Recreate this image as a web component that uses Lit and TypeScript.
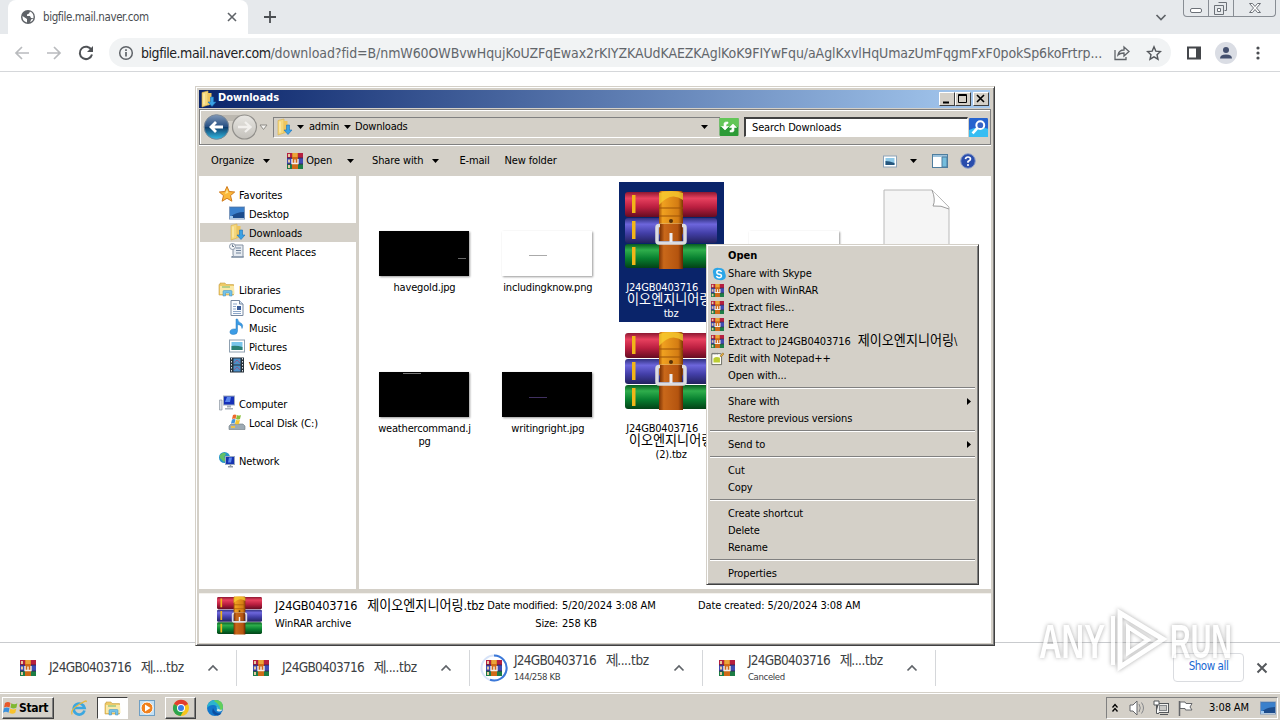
import { LitElement, html, css, svg, nothing } from 'lit';
import { customElement, property } from 'lit/decorators.js';
import { classMap } from 'lit/directives/class-map.js';

const chevronUp = html`<svg width="12" height="12" viewBox="0 0 12 12"><path d="M1.500 8.500 6 4l4.500 4.500" fill="none" stroke="#5f6368" stroke-width="1.700"/></svg>`;

const booksLarge = svg`
  <defs>
    <linearGradient id="r" x2="0" y2="1"><stop stop-color="#8d1730"/><stop offset=".25" stop-color="#e8415f"/><stop offset=".6" stop-color="#bb1f40"/><stop offset="1" stop-color="#650c22"/></linearGradient>
    <linearGradient id="b" x2="0" y2="1"><stop stop-color="#30307e"/><stop offset=".25" stop-color="#6d66dc"/><stop offset=".6" stop-color="#433fa8"/><stop offset="1" stop-color="#23225e"/></linearGradient>
    <linearGradient id="g" x2="0" y2="1"><stop stop-color="#075c20"/><stop offset=".25" stop-color="#2fae4c"/><stop offset=".6" stop-color="#088030"/><stop offset="1" stop-color="#034217"/></linearGradient>
    <linearGradient id="s" x2="1" y2="0"><stop stop-color="#a85307"/><stop offset=".15" stop-color="#f0a120"/><stop offset=".8" stop-color="#d47c13"/><stop offset="1" stop-color="#7c3804"/></linearGradient>
    <linearGradient id="t" x2="1" y2="0"><stop stop-color="#7c3305"/><stop offset=".2" stop-color="#c9681a"/><stop offset=".8" stop-color="#b4540f"/><stop offset="1" stop-color="#652703"/></linearGradient>
  </defs>
  <rect x="0" y="2" width="92" height="25" rx="3" fill="url(#r)"/>
  <rect x="0" y="28" width="92" height="25" rx="3" fill="url(#b)"/>
  <rect x="0" y="54" width="92" height="24" rx="3" fill="url(#g)"/>
  <path d="M7 5h3.500v18H7zM7 31h3.500v18H7zM7 57h3.500v18H7z" fill="#f2b619"/>
  <rect x="34" y="53" width="24" height="26" fill="url(#t)"/>
  <rect x="34" y="1" width="24" height="44" rx="2" fill="url(#s)"/>
  <path d="M34 3q12 -4 24 0v7q-12 -9 -24 5z" fill="#f7cf32" opacity=".75"/>
  <path d="M34 18h24M34 26h24" stroke="#9c5206" stroke-width="1.200"/>
  <circle cx="46" cy="31" r="2" fill="#57320a"/>
  <rect x="32" y="35.500" width="28" height="17.500" rx="2" fill="none" stroke="#dcdce0" stroke-width="3.500"/>
  <rect x="35" y="34" width="22" height="17" fill="url(#t)"/>
  <path d="M46 43v9" stroke="#ececf1" stroke-width="3"/>`;

const booksSmall = svg`
  <rect width="16" height="5" fill="#b61f3f"/><rect y="5" width="16" height="6" fill="#3f4bb4"/><rect y="11" width="16" height="5" fill="#1c7d45"/>
  <path d="M1 1h2v3H1zM1 6.500h2v3H1zM1 12h2v3H1z" fill="#e6c9a0"/>
  <path d="M0 5h16M0 11h16" stroke="#31204b" stroke-width=".8"/>
  <rect x="5" width="6" height="16" fill="#cf6a18"/><rect x="5.500" width="5" height="4" fill="#eca53a"/>
  <path d="M5 6v4.500h6V6M8 6.500v3.500" fill="none" stroke="#f4eee8" stroke-width="1.400"/>`;

const folderDown = svg`
  <path d="M2 1.500 8 0v14l-6 2z" fill="#f5d77b" stroke="#d6ae49" stroke-width=".6"/>
  <path d="M8 2h3.500v11L8 14.500z" fill="#eec45c"/><path d="M4 2.500v11" stroke="#fff3c4"/>
  <path d="M10.500 6h3v5H16l-4 4.500L8 11h2.500z" fill="#3aa1e4" stroke="#1b6fb6" stroke-width=".6"/>`;

const libraryFolder = svg`
  <path d="M0 3.500h1V2h5l1 1.500h7.500V14H0z" fill="#efcb66" stroke="#c6a048" stroke-width=".6"/>
  <path d="M1 5h14l.500 8H1z" fill="#fae9a8"/><path d="M3 6h8" stroke="#73b56b"/>
  <path d="M4 15V10.500q0-1 1-1h7q1 0 1 1V15h-2.500v-3h-4v3z" fill="#74c2e8" stroke="#3f8fc0" stroke-width=".5"/>`;

const icons: Record<string, unknown> = {
  rar: booksSmall,
  downloads: folderDown,
  libraries: libraryFolder,
  star: svg`<path d="m8 .5 2.200 5 5.500.5-4.200 3.600 1.400 5.600L8 12.300l-4.900 2.900 1.400-5.600L.3 6l5.500-.5z" fill="#fbb83a" stroke="#d17b1d"/><path d="m8 3 1.300 3.700L6 8z" fill="#ffe695"/>`,
  desktop: svg`<rect x=".5" y="2" width="15" height="12" fill="#1c4c8c" stroke="#7c98bd"/><path d="M1 2.500h14V7Q7 7 1 12z" fill="#3a80cc"/><path d="M1 13.500h14" stroke="#b5c8dc"/><path d="M1 11h3v2.500H1z" fill="#9fc8ee"/>`,
  recent: svg`<path d="M4 2h10v12H3q2-1 1-3z" fill="#e6ebf1" stroke="#8491a1"/><path d="M7 5h5M7 7.500h5M7 10h5M2 14h13" stroke="#71839a"/><circle cx="3.500" cy="3.500" r="3" fill="#f4f6f8" stroke="#8b98a8"/><path d="M3.500 1.500v2H5" fill="none" stroke="#66788d"/>`,
  documents: svg`<path d="M2 .5h8.500L14 4v11.500H2z" fill="#fbfdff" stroke="#7788a0"/><path d="M10.500.5V4H14" fill="#d1dff0" stroke="#7788a0"/><path d="M4 4h4M4 6.500h3M4 9h3M4 11.500h8M4 13.500h8" stroke="#8ca6c8"/><path d="M8 6h4v4H8z" fill="#395d9a"/>`,
  music: svg`<path d="M7 0h1.500q.5 3 4 4.500 2 1.500.5 5 0-3.500-4.500-4V12q0 3.500-4 3.500T1 12.500 7 10z" fill="#3b9ce6" stroke="#2479bd" stroke-width=".5"/>`,
  pictures: svg`<rect x=".5" y="2" width="15" height="12" fill="#fff" stroke="#8fa0b0"/><path d="M2.500 4h11v8h-11z" fill="#79c5ea"/><path d="M2.500 8q5-1 11 1v3h-11z" fill="#2b8074"/>`,
  videos: svg`<rect x="1" y=".5" width="14" height="15" fill="#26313a"/><path d="M2.500 1v14M13.500 1v14" stroke="#dbe2e8" stroke-dasharray="1.500 1.500"/><path d="M4.500 1.500h7v6h-7zM4.500 8.500h7v6h-7z" fill="#4c8fc9"/><path d="m5 6 3-3 3 3M5 13l3-3 3 3" stroke="#8c5d8e" fill="none"/>`,
  computer: svg`<path d="M.5 5H3v10H.5z" fill="#dfe3e8" stroke="#8d97a2" stroke-width=".7"/><rect x="4.500" y="1" width="11" height="9" fill="#1530b8" stroke="#a2aec0"/><path d="M8 2h4l-1 5H6z" fill="#5a86ee"/><path d="M8 10.500h4v2H8zM6 13h8v1.500H6z" fill="#a8b0ba"/>`,
  disk: svg`<path d="M2 10h12l2 2v3.500H0V12z" fill="#9daab3" stroke="#6d7880" stroke-width=".6"/><path d="M2 12h4v2H2z" fill="#ecc24c"/><path d="M4 1q2-1 3.500 0L6.500 5Q5 4 3 5z" fill="#ee6a2c"/><path d="M8 1q2 1 4 0l-1 4q-2 1-4 0z" fill="#8abf3b"/><path d="M3 5.500q2-1 3.500 0l-1 4Q4 8.500 2 9.500z" fill="#3f94dd"/><path d="M7 5.800q2 1 4 0l-1 4q-2 1-4 0z" fill="#f5c531"/>`,
  network: svg`<circle cx="5.500" cy="5.500" r="5.500" fill="#2596c7"/><path d="M1 3q4-4 6-1L5 5l2 2-2 3-4-4z" fill="#62c068"/><rect x="6.500" y="4.500" width="9" height="8" fill="#1633b0" stroke="#9aa9c0"/><path d="M10 5.500h3l-1 5H9z" fill="#5c88ed"/><path d="M9 14.800h5M11.500 12.500v3" stroke="#9099a5" stroke-width="1.500"/>`,
  skype: svg`<path d="M8 1q6.500 0 7 6 2 4.500-1 7-3 2-5.500.8Q1.500 15 1.500 8 0 4 3 1.800 5.500.2 8 1" fill="#2ba5e8"/><path d="M11 5.500Q10 4 8 4 5.500 4 5.500 6t2.700 2.200T10.800 10.200 8 12.200Q6 12.200 5 10.500" fill="none" stroke="#fff" stroke-width="1.700"/>`,
  notepad: svg`<path d="M1 2h11l1 2v11.500H1z" fill="#fffef5" stroke="#55574e"/><path d="M3 8q3-3 8-1v6H3z" fill="#bccd33"/><path d="M2 1v2M4 1v2M6 1v2M8 1v2" stroke="#7b7b7b"/><path d="m11 5 3.500-4L16 2.500 12.500 6z" fill="#f4b53a" stroke="#6b512b" stroke-width=".6"/>`,
  views: svg`<rect x="1.500" y="3" width="13" height="11" fill="#fff" stroke="#8da3b8"/><path d="M3.500 5h9v7h-9z" fill="#8fc9e8"/><path d="M3.500 8q4 0 9 2v2h-9z" fill="#25567d"/>`,
  preview: svg`<rect x=".5" y="1.500" width="15" height="13" fill="#fff" stroke="#4e7d9e"/><path d="M1 3h14" stroke="#9ac1dc" stroke-width="2"/><path d="M10 4h5v10h-5z" fill="#74bddd" stroke="#4e7d9e"/>`,
  help: svg`<circle cx="8" cy="8" r="7.300" fill="#2a4dac" stroke="#8fa0c8"/><path d="M5.500 6.200Q5.700 4 8 4t2.500 2Q10.500 7.200 8 8.500v1.200" fill="none" stroke="#fff" stroke-width="1.700"/><circle cx="8" cy="12" r="1.100" fill="#fff"/>`,
  refresh: svg`<rect width="19" height="18" x="-1.500" y="-1" rx="1" fill="#2c9b36"/><path d="M-1.500-1h19v9h-19z" fill="#63c658"/><path d="M3 4.500v3H.5L4 11l3.500-3.500H5V6q0-1.500 2-1.500V3Q3 2.500 3 4.500M13 11.500v-3h2.500L12 5 8.500 8.500H11V10q0 1.500-2 1.500V13q4 .5 4-1.500" fill="#fff" stroke="#fff" stroke-width=".6"/>`,
  search: svg`<rect width="16" height="16" rx="1" fill="#2563cf"/><path d="M0 10q8-4 16-1v7H0z" fill="#37bdf2"/><circle cx="9.500" cy="6" r="3.300" fill="#3763c4" stroke="#fff" stroke-width="1.700"/><path d="m7 8.500-4 4.500" stroke="#fff" stroke-width="2.200"/>`,
  ie: svg`<path d="M13.500 10.500A5.500 5.500 0 1 1 13.600 8H4" fill="none" stroke="#3ba7e0" stroke-width="2.700"/><path d="M1 14.500Q-1 10 8 4.500T15 2" fill="none" stroke="#e8b83c" stroke-width="1.200"/>`,
  wmp: svg`<rect x=".5" y=".5" width="15" height="15" fill="#c3e0f4" stroke="#6f9fc4"/><circle cx="8" cy="8" r="6" fill="#f0811e" stroke="#fff"/><path d="m6 4.500 5.500 3.500L6 11.500z" fill="#fff"/>`,
  chrome: svg`<circle cx="8" cy="8" r="8" fill="#f8c51c"/><path d="M8 8 1 4A8 8 0 0 1 15 4z" fill="#e23c2f"/><path d="M8 8 1 4A8 8 0 0 0 7.500 16L11 10z" fill="#2da54e"/><circle cx="8" cy="8" r="4" fill="#fff"/><circle cx="8" cy="8" r="3" fill="#3b7de9"/>`,
  edge: svg`<circle cx="8" cy="8" r="8" fill="#1277cc"/><path d="M0 8Q1 0 8 0t8 7q0 4-5 4-2 0-1.500-1Q11 5 6 5 2 5 0 8" fill="#2bb4cf"/><path d="M8 0q8 0 8 7 0 3-3 4Q14 5 7 1z" fill="#62cf5b"/><path d="M6 8q-3 7 5 7.500 2-.500 3.500-2Q8 14 6 8" fill="#0d4fa0"/><path d="M9.500 7q2 1 .5 3-1 2 4 1.200l1.500-1.400Q11 10 9.500 7" fill="#d6e7e8"/>`,
  speaker: svg`<path d="M1 5h3l4-4v14l-4-4H1z" fill="#fff" stroke="#65676a"/><path d="M10 4q2.500 4 0 8M12.500 2.500q4 5.500 0 11" fill="none" stroke="#85878a"/>`,
  lan: svg`<rect x="4.500" y="3.500" width="11" height="9" fill="#f2f2ef" stroke="#55585b"/><rect x="6.500" y="5.500" width="7" height="5" fill="#c9c9c6" stroke="#85888b"/><path d="M1 1h5v4H1zM3.500 5v8.500H6M7 14.500h8" fill="#fff" stroke="#55585b"/>`,
  flag: svg`<path d="M2.500 1v15" stroke="#65676a" stroke-width="1.500"/><path d="M3 2h5l1 1.500h6L13 7l2 3H8.500L8 8.500H3z" fill="#fff" stroke="#65676a"/>`,
  windows: svg`<path d="M2 3q3-2 5.500 0L6.500 7.500q-3-1.500-5.500 0z" fill="#e8582a"/><path d="M8.300 3.200q3 2 6 0L13.500 7.500q-3 2-6 0z" fill="#7fb832"/><path d="M1 8.300q3-1.500 5.500 0l-1 4.500Q3 11 0 12.700z" fill="#3990dd"/><path d="M7.300 8.500q3 2 6 0l-1 4.300q-3 2-6 0z" fill="#f9c22c"/>`,
};

@customElement('ui-icon')
export class UiIcon extends LitElement {
  static styles = css`
    :host { display: inline-flex; flex: none; width: 16px; height: 16px; }
    svg { width: 100%; height: 100%; display: block; overflow: visible; }
  `;

  @property() name = '';

  render() {
    return html`<svg viewBox="0 0 16 16">${icons[this.name]}</svg>`;
  }
}

@customElement('rar-books')
export class RarBooks extends LitElement {
  static styles = css`
    :host { display: block; flex: none; }
    svg { width: 100%; height: 100%; display: block; }
  `;

  render() {
    return html`<svg viewBox="0 0 92 80" preserveAspectRatio="none">${booksLarge}</svg>`;
  }
}

@customElement('browser-top')
export class BrowserTop extends LitElement {
  static styles = css`
    :host { display: block; height: 72px; box-sizing: border-box; border-bottom: 1px solid #d5d7da; }
    .strip { height: 34px; background: #e6e9ec; display: flex; align-items: flex-start; padding-left: 8px; }
    .tab {
      width: 240px; height: 34px; box-sizing: border-box; background: #fff; border-radius: 8px 8px 0 0;
      display: flex; align-items: center; padding: 0 10px 0 13px; font-size: 11.500px; color: #4a4d51;
    }
    .tab .name { flex: 1; margin-left: 8px; letter-spacing: -0.4px; }
    .plus { margin: 10px 0 0 15px; }
    .drop { margin: 11px 16px 0 auto; }
    .buttons { display: flex; height: 17px; box-sizing: border-box; margin-right: 4px; border: 1px solid #888d94; border-top: 0; border-radius: 0 0 4px 4px; }
    .buttons svg { display: block; border-right: 1px solid #888d94; }
    .buttons svg:last-child { border: 0; }
    .bar { display: flex; height: 37px; align-items: center; padding-left: 14px; }
    .bar > svg { flex: none; margin-right: 16px; }
    .omni {
      width: 1063px; height: 29px; box-sizing: border-box; border-radius: 15px; background: #f1f3f4; margin-left: -1px;
      display: flex; align-items: center; padding: 0 9px; font-size: 14px; color: #62666b;
    }
    .omni svg { flex: none; }
    .url { margin-left: 7px; width: 972px; white-space: nowrap; letter-spacing: -0.09px; }
    .url b { font-weight: normal; color: #202124; letter-spacing: -0.45px; }
    .omni .star { margin-left: 16px; }
    .bar .panel { margin: 0 11px 0 13px; }
    .bar .user { margin-right: 10px; }
  `;

  render() {
    return html`
      <div class="strip">
        <div class="tab">
          <svg width="14" height="14" viewBox="0 0 14 14"><circle cx="7" cy="7" r="7" fill="#5f6368"/><path d="M1.500 6 6 9v3.500Q1 11 1.500 6M5 1.500l4 0-1 2-2 1v1.500H9l1 2h2.500Q13 3 9 1.500M9 12l1.500-3 2-.5Q12 11 9 12" fill="#fff"/></svg>
          <span class="name">bigfile.mail.naver.com</span>
          <svg width="12" height="12" viewBox="0 0 12 12"><path d="m2 2 8 8M10 2l-8 8" stroke="#5f6368" stroke-width="1.600"/></svg>
        </div>
        <svg class="plus" width="14" height="14" viewBox="0 0 14 14"><path d="M7 1v12M1 7h12" stroke="#4b4e52" stroke-width="1.800"/></svg>
        <svg class="drop" width="12" height="12" viewBox="0 0 12 12"><path d="m1.500 4 4.500 4.500L10.500 4" fill="none" stroke="#5f6368" stroke-width="1.700"/></svg>
        <div class="buttons">
          <svg width="24" height="16"><rect x="6.500" y="8.500" width="11" height="4" rx="1.500" fill="#fff" stroke="#6c7178"/></svg>
          <svg width="24" height="16"><path d="M9.500 2.500h8v8h-2M5.500 5.500h9v9h-9z" fill="none" stroke="#6c7178"/><path d="M8.500 8.500h3v3h-3z" fill="#fff" stroke="#6c7178"/></svg>
          <svg width="41" height="16"><path d="M15.500 3.500h3l2.500 3 2.500-3h3l-4 4.500 4 4.500h-3L21 9.500l-2.500 3h-3l4-4.500z" fill="#fff" stroke="#6c7178"/></svg>
        </div>
      </div>
      <div class="bar">
        <svg width="16" height="16" viewBox="0 0 16 16"><path d="M15 8H2M8 2 2 8l6 6" fill="none" stroke="#b9bbbe" stroke-width="1.700"/></svg>
        <svg width="16" height="16" viewBox="0 0 16 16"><path d="M1 8h13M8 2l6 6-6 6" fill="none" stroke="#b9bbbe" stroke-width="1.700"/></svg>
        <svg width="16" height="16" viewBox="0 0 16 16"><path d="M13.500 5A6.200 6.200 0 1 0 14 9.500" fill="none" stroke="#4f5256" stroke-width="2"/><path d="M15 1v6H9z" fill="#4f5256"/></svg>
        <div class="omni">
          <svg width="16" height="16" viewBox="0 0 16 16"><circle cx="8" cy="8" r="6.300" fill="none" stroke="#5f6368" stroke-width="1.500"/><path d="M8 7v4.500M8 4.300V6" stroke="#5f6368" stroke-width="1.700"/></svg>
          <span class="url"><b>bigfile.mail.naver.com</b>/download?fid=B/nmW60OWBvwHqujKoUZFqEwax2rKIYZKAUdKAEZKAglKoK9FIYwFqu/aAglKxvlHqUmazUmFqgmFxF0pokSp6koFrtrp...</span>
          <svg width="17" height="16" viewBox="0 0 17 16"><path d="M2 5v9.500h11V12M5 10q1-5 6-5V2l5 4.500-5 4.500V8Q7 8 5 10z" fill="none" stroke="#5f6368" stroke-width="1.300"/></svg>
          <svg class="star" width="16" height="16" viewBox="0 0 16 16"><path d="m8 1.800 1.800 4.300 4.700.4-3.500 3.200 1 4.500L8 11.800l-4 2.400 1-4.500L1.500 6.500l4.700-.4z" fill="none" stroke="#55585c" stroke-width="1.400"/></svg>
        </div>
        <svg class="panel" width="20" height="16" viewBox="0 0 20 16"><path d="M4 2.500h12v11H4z" fill="#fff" stroke="#44474b" stroke-width="2"/><path d="M12 2h4.500v12H12z" fill="#44474b"/></svg>
        <svg class="user" width="22" height="22" viewBox="0 0 22 22"><circle cx="11" cy="11" r="11" fill="#dadde4"/><circle cx="11" cy="8" r="3" fill="#44506e"/><path d="M5 16.500q0-4 6-4t6 4z" fill="#44506e"/></svg>
        <svg width="22" height="16" viewBox="0 0 22 16"><circle cx="11" cy="3" r="1.600" fill="#4b4e52"/><circle cx="11" cy="8" r="1.600" fill="#4b4e52"/><circle cx="11" cy="13" r="1.600" fill="#4b4e52"/></svg>
      </div>
    `;
  }
}

type NavItem = { icon: string; text: string; child?: boolean; selected?: boolean };

const navItems: (NavItem | null)[] = [
  { icon: 'star', text: 'Favorites' },
  { icon: 'desktop', text: 'Desktop', child: true },
  { icon: 'downloads', text: 'Downloads', child: true, selected: true },
  { icon: 'recent', text: 'Recent Places', child: true },
  null,
  { icon: 'libraries', text: 'Libraries' },
  { icon: 'documents', text: 'Documents', child: true },
  { icon: 'music', text: 'Music', child: true },
  { icon: 'pictures', text: 'Pictures', child: true },
  { icon: 'videos', text: 'Videos', child: true },
  null,
  { icon: 'computer', text: 'Computer' },
  { icon: 'disk', text: 'Local Disk (C:)', child: true },
  null,
  { icon: 'network', text: 'Network' },
];

const caret = html`<svg width="7" height="4" viewBox="0 0 7 4"><path d="M0 0h7L3.500 4z"/></svg>`;

@customElement('explorer-window')
export class ExplorerWindow extends LitElement {
  static styles = css`
    :host {
      display: flex; flex-direction: column; box-sizing: border-box; width: 800px; height: 560px;
      border: 1px solid; border-color: #d4d0c8 #404040 #404040 #d4d0c8;
      box-shadow: inset 1px 1px #fff, inset -1px -1px #808080;
      background: #d4d0c8; padding: 3px 3px 2px;
      font-size: 11px; letter-spacing: -0.14px; color: #000;
    }
    .title {
      height: 18px; flex: none; margin-right: 1px; display: flex; align-items: center; padding: 0 1px 0 1px;
      background: linear-gradient(90deg, #0a246a, #a6caf0); color: #fff; font-weight: bold; letter-spacing: 0;
    }
    .title ui-icon { margin-right: 1px; }
    .title span { flex: 1; margin-left: 1px; line-height: 16px; height: 18px; }
    .title svg { background: #d4d0c8; border: 1px solid; border-color: #fff #404040 #404040 #fff; }
    .title svg:last-child { margin-left: 2px; }
    .address {
      height: 36px; flex: none; box-sizing: border-box; margin-top: 1px; display: flex; align-items: center;
      border: 1px solid #808080; box-shadow: inset 1px 1px #fff, 0 1px #fff; padding: 0 0 0 3px;
    }
    .nav { flex: none; }
    .path {
      width: 447px; flex: none; height: 21px; box-sizing: border-box; margin-left: 3px; display: flex; align-items: center;
      border: 1px solid #808080; border-right: 0; border-bottom-color: #fff; padding: 0 12px 0 3px;
    }
    .path span { height: 21px; line-height: 19px; letter-spacing: -0.2px; }
    .path svg { margin: 0 4px 0 5px; }
    .path ui-icon { margin-left: -1px; }
    .path ui-icon + svg { margin: 0 5px; }
    .path svg:last-of-type { margin: 0 0 0 auto; }
    .refresh { width: 16px; height: 16px; margin: 0 7px 0 1px; }
    .search {
      flex: 1; height: 20px; box-sizing: border-box; background: #fff; border: 1px solid; border-width: 2px 1px 1px 2px;
      border-color: #404040 #fff #fff #404040; padding-left: 6px; line-height: 18px;
    }
    .find { width: 19px; height: 19px; margin: 0 2px 0 1px; }
    .tools { height: 31px; flex: none; display: flex; align-items: center; padding: 0 15px 0 12px; }
    .tools span { margin-right: 9px; }
    .tools svg { margin-right: 18px; }
    .tools .rar { margin: 0 3px 0 -1px; }
    .tools .open { margin-right: 15px; }
    .tools .mail { margin: 0 15px 0 2px; }
    .tools .views { width: 16px; margin: 0 12px 0 auto; }
    .tools .preview { margin-right: 12px; margin-left: -3px; }
    .main { display: flex; height: 413px; flex: none; }
    .tree { width: 157px; flex: none; box-sizing: border-box; background: #fff; padding-top: 9px; }
    .row { height: 19px; display: flex; align-items: center; padding-left: 20px; gap: 4px; box-sizing: border-box; padding-top: 2px; }
    .row ui-icon { margin-top: -4px; }
    .row.child { padding-left: 29px; margin-left: 1px; }
    .row.selected { background: #d4d0c8; }
    .files {
      flex: 1; margin-left: 3px; background: #fff; padding: 6px 0 0 13px; display: grid; align-content: start;
      grid-template-columns: repeat(5, 105px); grid-auto-rows: 140px; gap: 1px 18.300px;
    }
    .file { display: flex; flex-direction: column; align-items: center; text-align: center; line-height: 13px; white-space: nowrap; letter-spacing: -0.18px; }
    .file > span { height: 13px; }
    .file.selected { background: #0a246a; color: #fff; }
    .pic { height: 96px; width: 100%; display: flex; justify-content: center; align-items: flex-end; margin-bottom: 3px; flex: none; }
    .thumb { width: 90px; height: 45px; margin: 0 1px 2px 0; background: #000; box-shadow: 1px 1px 2px #999; display: flex; }
    .thumb.white { background: #fff; }
    .thumb i { height: 1px; width: 18px; margin: 24px 0 0 27px; background: #aaa; }
    .thumb .right { margin: 27px 0 0 79px; width: 8px; background: #666; }
    .thumb .top { margin: 1px 0 0 24px; background: #777; }
    .thumb .violet { margin-top: 25px; background: #403060; }
    .pic rar-books { width: 92px; height: 80px; align-self: center; }
    .file .page { align-self: flex-start; margin: 7px 0 0 -2px; }
    .ko { font-size: 13.100px; letter-spacing: 0; }
    .file .ko { line-height: 11px; }
    .gap { word-spacing: 1.500px; }
    .file .gap { margin-left: 3px; }
    .details { height: 50px; flex: none; margin-top: 4px; background: #fff; border-top: 1px solid #f4f2ee; display: flex; padding: 3px 0 0 18px; box-sizing: border-box; }
    .details rar-books { width: 45px; height: 39px; margin-top: -1px; }
    .details .column { display: grid; grid-template-rows: 18px 18px; line-height: 18px; white-space: pre; }
    .details .name { width: 209px; margin-left: 13px; }
    .details .name .gap { font-size: 12.600px; letter-spacing: -0.2px; }
    .details .name .ko { letter-spacing: 0; }
    .details .keys { width: 74px; text-align: right; margin-right: 4px; letter-spacing: -0.2px; }
    .details .value { width: 136px; letter-spacing: -0.05px; }
    .details .made { letter-spacing: -0.1px; }
  `;

  renderNav(item: NavItem | null) {
    if (!item) return html`<div class="row"></div>`;
    return html`
      <div class=${classMap({ row: true, child: !!item.child, selected: !!item.selected })}>
        <ui-icon name=${item.icon}></ui-icon>${item.text}
      </div>`;
  }

  render() {
    return html`
      <div class="title">
        <ui-icon name="downloads"></ui-icon><span>Downloads</span>
        <svg width="14" height="12"><path d="M3 9.500h6" stroke="#000" stroke-width="2"/></svg>
        <svg width="14" height="12"><path d="M2.500 1.500h8v8h-8zM2.500 2.500h8" fill="none" stroke="#000"/></svg>
        <svg width="14" height="12"><path d="m3 2 7 7M10 2 3 9" stroke="#000" stroke-width="1.600"/></svg>
      </div>
      <div class="address">
        <svg class="nav" width="67" height="28" viewBox="0 0 67 28">
          <defs>
            <linearGradient id="back" x2="0" y2="1"><stop stop-color="#8098b8"/><stop offset=".48" stop-color="#275083"/><stop offset=".5" stop-color="#0e3a68"/><stop offset="1" stop-color="#33bce4"/></linearGradient>
            <linearGradient id="fwd" x2="0" y2="1"><stop stop-color="#e8e6e2"/><stop offset="1" stop-color="#c4c1bb"/></linearGradient>
          </defs>
          <path d="M14 2h28v6H14z" fill="#bcb8b0"/>
          <circle cx="13.500" cy="14" r="12.300" fill="url(#back)" stroke="#7a8896"/>
          <circle cx="41.500" cy="14" r="12" fill="url(#fwd)" stroke="#918f8b" stroke-width="1.200"/>
          <path d="M20 14H8M13 9l-5 5 5 5" fill="none" stroke="#fff" stroke-width="2.800"/>
          <path d="M35 14h12M42 9l5.500 5L42 19" fill="none" stroke="#f2f0ed" stroke-width="2.300"/>
          <path d="M57 12h7l-3.500 4.500z" fill="#f4f3f0" stroke="#8d8b86"/>
        </svg>
        <div class="path">
          <ui-icon name="downloads"></ui-icon>${caret}<span>admin</span>${caret}<span>Downloads</span>${caret}
        </div>
        <ui-icon class="refresh" name="refresh"></ui-icon>
        <div class="search">Search Downloads</div>
        <ui-icon class="find" name="search"></ui-icon>
      </div>
      <div class="tools">
        <span>Organize</span>${caret}
        <ui-icon class="rar" name="rar"></ui-icon><span class="open">Open</span>${caret}
        <span>Share with</span>${caret}
        <span class="mail">E-mail</span><span>New folder</span>
        <ui-icon class="views" name="views"></ui-icon>${caret}
        <ui-icon class="preview" name="preview"></ui-icon>
        <ui-icon name="help"></ui-icon>
      </div>
      <div class="main">
        <div class="tree">${navItems.map((item) => this.renderNav(item))}</div>
        <div class="files">
          <div class="file"><div class="pic"><div class="thumb"><i class="right"></i></div></div>havegold.jpg</div>
          <div class="file"><div class="pic"><div class="thumb white"><i></i></div></div>includingknow.png</div>
          <div class="file selected">
            <div class="pic"><rar-books></rar-books></div>
            <span class="gap">J24GB0403716&nbsp; <span class="ko">제</span></span><span class="ko">이오엔지니어링.</span><span>tbz</span>
          </div>
          <div class="file"><div class="pic"><div class="thumb white"></div></div></div>
          <div class="file">
            <div class="pic">
              <svg class="page" width="68" height="84" viewBox="0 0 68 84"><path d="M1 1h48l17 17v64H1z" fill="#f5f5f5" stroke="#b9b9b9"/><path d="M49 1q4 10 1 16 8-1 16 3" fill="#fff" stroke="#9c9c9c"/></svg>
            </div>
          </div>
          <div class="file"><div class="pic"><div class="thumb"><i class="top"></i></div></div><span>weathercommand.j</span><span>pg</span></div>
          <div class="file"><div class="pic"><div class="thumb"><i class="violet"></i></div></div>writingright.jpg</div>
          <div class="file">
            <div class="pic"><rar-books></rar-books></div>
            <span class="gap">J24GB0403716&nbsp; <span class="ko">제</span></span><span class="ko">이오엔지니어링</span><span>(2).tbz</span>
          </div>
        </div>
      </div>
      <div class="details">
        <rar-books></rar-books>
        <div class="column name"><span class="gap">J24GB0403716&nbsp; <span class="ko">제이오엔지니어링</span>.tbz</span><span>WinRAR archive</span></div>
        <div class="column keys"><span>Date modified:</span><span>Size:</span></div>
        <div class="column value"><span>5/20/2024 3:08 AM</span><span>258 KB</span></div>
        <div class="column made"><span>Date created: 5/20/2024 3:08 AM</span></div>
      </div>
    `;
  }
}

type MenuItem = { text: string; icon?: string; korean?: string; bold?: boolean; more?: boolean };

const menuItems: (MenuItem | null)[] = [
  { text: 'Open', bold: true },
  { text: 'Share with Skype', icon: 'skype' },
  { text: 'Open with WinRAR', icon: 'rar' },
  { text: 'Extract files...', icon: 'rar' },
  { text: 'Extract Here', icon: 'rar' },
  { text: 'Extract to J24GB0403716\u00a0 ', icon: 'rar', korean: '제이오엔지니어링' },
  { text: 'Edit with Notepad++', icon: 'notepad' },
  { text: 'Open with...' },
  null,
  { text: 'Share with', more: true },
  { text: 'Restore previous versions' },
  null,
  { text: 'Send to', more: true },
  null,
  { text: 'Cut' },
  { text: 'Copy' },
  null,
  { text: 'Create shortcut' },
  { text: 'Delete' },
  { text: 'Rename' },
  null,
  { text: 'Properties' },
];

@customElement('context-menu')
export class ContextMenu extends LitElement {
  static styles = css`
    :host {
      display: block; box-sizing: border-box; width: 273px; height: 341px; padding: 2px;
      background: #d4d0c8; border: 1px solid; border-color: #d4d0c8 #404040 #404040 #d4d0c8;
      box-shadow: inset 1px 1px #fff, inset -1px -1px #808080;
      font-size: 11px; letter-spacing: -0.13px;
    }
    .item { height: 17px; display: flex; align-items: center; white-space: pre; line-height: 17px; }
    .item.bold { height: 18px; font-weight: bold; letter-spacing: 0; line-height: 18px; align-items: flex-start; }
    .icon { width: 17px; display: flex; justify-content: center; padding-right: 2px; }
    ui-icon { width: 13px; height: 13px; }
    ui-icon[name="skype"] { width: 14px; height: 14px; margin-right: -2px; }
    .more { margin: 0 5px 0 auto; }
    .line { height: 1px; border-top: 1px solid #808080; background: #fff; margin: 3px 1px 4px; }
    .ko { font-size: 13.100px; letter-spacing: 0; line-height: 15px; margin-left: 1px; }
  `;

  render() {
    return menuItems.map((item) => item
      ? html`
        <div class=${classMap({ item: true, bold: !!item.bold })}>
          <span class="icon">${item.icon ? html`<ui-icon name=${item.icon}></ui-icon>` : nothing}</span>
          <span class="text">${item.text}${item.korean ? html`<span class="ko">${item.korean}</span>\\` : nothing}</span>
          ${item.more ? html`<svg class="more" width="4" height="7"><path d="M0 0v7l4-3.500z"/></svg>` : nothing}
        </div>`
      : html`<div class="line"></div>`);
  }
}

const downloads = [
  { status: '' },
  { status: '' },
  { status: '144/258 KB', progress: true },
  { status: 'Canceled' },
];

@customElement('download-shelf')
export class DownloadShelf extends LitElement {
  static styles = css`
    :host { display: flex; height: 50px; box-sizing: border-box; border-top: 1px solid #c9cbce; background: #fff; color: #3c4043; align-items: center; }
    .item { width: 233px; height: 36px; box-sizing: border-box; border-right: 1px solid #d5d7da; display: flex; align-items: center; padding: 0 17px 0 16px; }
    .item:first-child { width: 237px; padding-left: 20px; }
    .item:nth-child(3) { padding-left: 12px; }
    .badge { width: 28px; display: flex; justify-content: center; margin: 0 7px 0 -6px; }
    .item:first-child .badge { margin-right: 7px; }
    .item:nth-child(3) .badge { position: relative; margin: 0 6px 0 -2px; }
    .ring { position: absolute; left: 0; top: -6px; }
    .text { flex: 1; font-size: 13.500px; letter-spacing: -0.74px; line-height: 17px; white-space: nowrap; word-spacing: 1.800px; }
    .item:nth-child(-n+2) .text { margin-top: -1px; }
    .ko { letter-spacing: -1.500px; font-size: 14px; line-height: 12px; }
    .dots { letter-spacing: -0.4px; }
    .status { font-size: 9.500px; letter-spacing: -0.35px; line-height: 15px; margin-top: 0; word-spacing: 0; }
    .all {
      width: 71px; height: 29px; box-sizing: border-box; margin: 0 12px 0 auto; border: 1px solid #dadce0; border-radius: 4px;
      font-size: 11.500px; letter-spacing: -0.45px; line-height: 25px; text-align: center; color: #1967d2;
    }
    .close { margin-right: 12px; }
  `;

  render() {
    return html`
      ${downloads.map((item) => html`
        <div class="item">
          <span class="badge">
            ${item.progress ? html`<svg class="ring" width="28" height="28" viewBox="0 0 28 28"><circle cx="14" cy="14" r="12.500" fill="none" stroke="#d7e3f8" stroke-width="2"/><path d="M14 1.500a12.500 12.500 0 1 1-4 24.300" fill="none" stroke="#3b78d8" stroke-width="2"/></svg>` : nothing}
            <ui-icon name="rar"></ui-icon>
          </span>
          <div class="text">
            J24GB0403716&nbsp; <span class="ko">제</span><span class="dots">....tbz</span>
            ${item.status ? html`<div class="status">${item.status}</div>` : nothing}
          </div>
          ${chevronUp}
        </div>`)}
      <div class="all">Show all</div>
      <svg class="close" width="12" height="12" viewBox="0 0 12 12"><path d="m1.500 1.500 9 9M10.500 1.500l-9 9" stroke="#55585c" stroke-width="2"/></svg>
    `;
  }
}

@customElement('task-bar')
export class TaskBar extends LitElement {
  static styles = css`
    :host { display: flex; height: 28px; box-sizing: border-box; background: #d4d0c8; border-top: 1px solid #d4d0c8; box-shadow: inset 0 1px #fff; padding: 3px 2px 1px; align-items: center; font-size: 11px; }
    .raised { border: 1px solid; border-color: #fff #404040 #404040 #fff; box-shadow: inset -1px -1px #808080; }
    .start { width: 52px; height: 22px; box-sizing: border-box; display: flex; align-items: center; font-size: 12px; font-weight: bold; letter-spacing: -0.3px; line-height: 18px; }
    .app { width: 31px; height: 22px; box-sizing: border-box; display: flex; align-items: center; justify-content: center; margin-right: 3px; }
    .start + .app { margin-left: 9px; }
    .app.pressed { background: #fff; border: 1px solid; border-color: #404040 #fff #fff #404040; }
    .tray { margin-left: auto; width: 172px; height: 22px; box-sizing: border-box; border: 1px solid; border-color: #808080 #fff #fff #808080; display: flex; align-items: center; padding: 0 1px 0 4px; gap: 8px; }
    .tray ui-icon:first-of-type { margin-left: 2px; }
    .clock { margin-left: 8px; flex: 1; white-space: nowrap; letter-spacing: -0.1px; }
  `;

  render() {
    return html`
      <div class="start raised"><ui-icon name="windows"></ui-icon>Start</div>
      <div class="app"><ui-icon name="ie"></ui-icon></div>
      <div class="app pressed"><ui-icon name="libraries"></ui-icon></div>
      <div class="app"><ui-icon name="wmp"></ui-icon></div>
      <div class="app raised"><ui-icon name="chrome"></ui-icon></div>
      <div class="app"><ui-icon name="edge"></ui-icon></div>
      <div class="tray">
        <svg width="8" height="10" viewBox="0 0 8 10"><path d="m1.500 4.500 2.500-3 2.500 3M1.500 8.500l2.500-3 2.500 3" fill="none" stroke="#000" stroke-width="1.300"/></svg>
        <ui-icon name="speaker"></ui-icon><ui-icon name="lan"></ui-icon><ui-icon name="flag"></ui-icon>
        <span class="clock">3:08 AM</span>
        <ui-icon name="desktop"></ui-icon>
      </div>
    `;
  }
}

@customElement('app-root')
export class AppRoot extends LitElement {
  static styles = css`
    :host {
      display: flex; flex-direction: column; position: relative; width: 1280px; height: 720px; overflow: hidden; background: #fff;
      font-family: "DejaVu Sans Condensed", "DejaVu Sans", "Noto Sans CJK KR", sans-serif; font-stretch: condensed;
    }
    .page { flex: 1; }
    explorer-window { position: absolute; left: 195px; top: 86px; }
    context-menu { position: absolute; left: 706px; top: 244px; }
    .mark { position: absolute; left: 1030px; top: 600px; overflow: visible; filter: drop-shadow(0 0 2px #909090); opacity: .75; }
    .mark text { font: bold 49px "Liberation Sans Narrow", "Liberation Sans", sans-serif; fill: #fff; }
  `;

  render() {
    return html`
      <browser-top></browser-top>
      <div class="page"></div>
      <download-shelf></download-shelf>
      <task-bar></task-bar>
      <explorer-window></explorer-window>
      <context-menu></context-menu>
      <svg class="mark" width="210" height="80" viewBox="0 0 210 80">
        <text x="9" y="58" textLength="66" lengthAdjust="spacingAndGlyphs">ANY</text>
        <path d="M90 13 133 39 90 67z" fill="none" stroke="#fff" stroke-width="5"/>
        <path d="M83 16v49M98 27v26l20-13z" fill="none" stroke="#fff" stroke-width="4"/>
        <text x="140" y="58" textLength="62" lengthAdjust="spacingAndGlyphs">RUN</text>
      </svg>
    `;
  }
}
